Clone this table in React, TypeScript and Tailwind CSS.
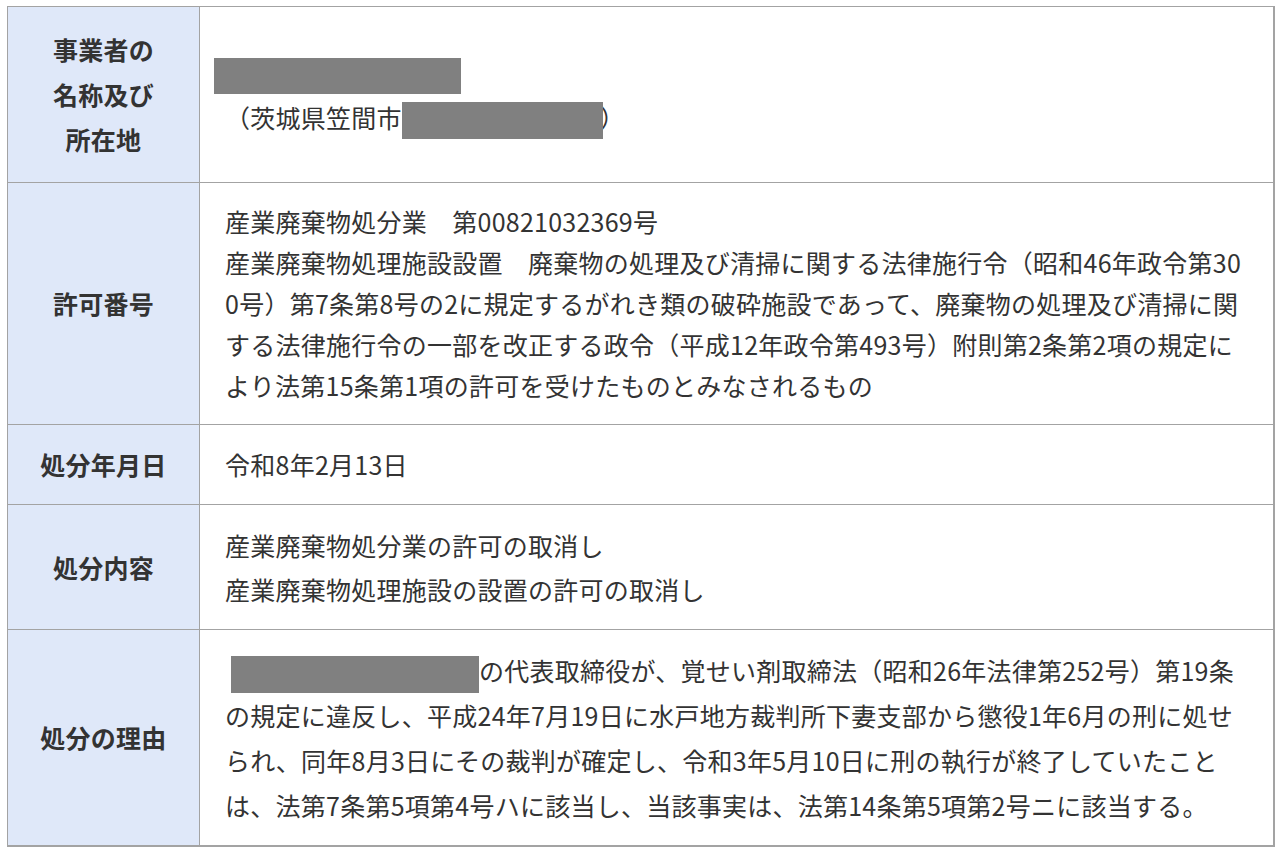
import React from 'react';

const Redacted = ({ className }: { className: string }) => (
  <span className={`inline-block bg-[#808080] align-middle relative z-10 ${className}`} />
);

const Label = ({ children, className = '' }: { children: React.ReactNode; className?: string }) => (
  <div className={`bg-[#dfe8f9] border-r border-[#a3a3a3] flex items-center justify-center text-center font-bold leading-[45px] ${className}`}>
    <div>{children}</div>
  </div>
);

const Cell = ({ children, className = '' }: { children: React.ReactNode; className?: string }) => (
  <div className={`flex items-center pl-[25px] pr-[20px] py-[18px] ${className}`}>
    <div>{children}</div>
  </div>
);

export default function App() {
  return (
    <div className="w-[1284px] h-[851px] bg-white pt-[6px] pl-[7px] font-['Noto_Sans_CJK_JP',sans-serif] text-[25px] tracking-[0.25px] text-[#333333]">
      <div className="w-[1268px] border-t border-l border-r-2 border-b-2 border-[#a3a3a3] grid grid-cols-[192px_1fr]">
        {/* 事業者 */}
        <Label className="border-b py-[20px]">
          事業者の<br />名称及び<br />所在地
        </Label>
        <Cell className="border-b border-[#a3a3a3] leading-[45px]">
          <Redacted className="w-[247px] h-[36px] -ml-[11px]" />
          <br />
          （茨城県笠間市<Redacted className="w-[201px] h-[37px] -mr-[3px]" />）
        </Cell>

        {/* 許可番号 */}
        <Label className="border-b">許可番号</Label>
        <Cell className="border-b border-[#a3a3a3] leading-[41px]">
          産業廃棄物処分業　第00821032369号
          <br />
          産業廃棄物処理施設設置　廃棄物の処理及び清掃に関する法律施行令（昭和46年政令第30
          <br />
          0号）第7条第8号の2に規定するがれき類の破砕施設であって、廃棄物の処理及び清掃に関
          <br />
          する法律施行令の一部を改正する政令（平成12年政令第493号）附則第2条第2項の規定に
          <br />
          より法第15条第1項の許可を受けたものとみなされるもの
        </Cell>

        {/* 処分年月日 */}
        <Label className="border-b">処分年月日</Label>
        <Cell className="border-b border-[#a3a3a3] leading-[41px] py-[19px]">令和8年2月13日</Cell>

        {/* 処分内容 */}
        <Label className="border-b">処分内容</Label>
        <Cell className="border-b border-[#a3a3a3] leading-[44px]">
          産業廃棄物処分業の許可の取消し
          <br />
          産業廃棄物処理施設の設置の許可の取消し
        </Cell>

        {/* 処分の理由 */}
        <Label>処分の理由</Label>
        <Cell className="leading-[45px] pt-[18px] pb-[17px]">
          <Redacted className="w-[248px] h-[37px] ml-[6px]" />
          の代表取締役が、覚せい剤取締法（昭和26年法律第252号）第19条
          <br />
          の規定に違反し、平成24年7月19日に水戸地方裁判所下妻支部から懲役1年6月の刑に処せ
          <br />
          られ、同年8月3日にその裁判が確定し、令和3年5月10日に刑の執行が終了していたこと
          <br />
          は、法第7条第5項第4号ハに該当し、当該事実は、法第14条第5項第2号ニに該当する。
        </Cell>
      </div>
    </div>
  );
}
